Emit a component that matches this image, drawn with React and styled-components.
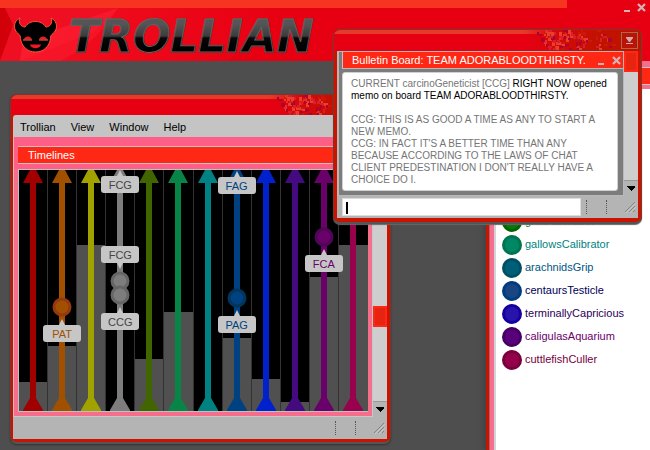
import React from 'react';
import styled, { createGlobalStyle } from 'styled-components';

const GlobalStyle = createGlobalStyle`
  *, *::before { box-sizing: border-box; }
  body {
    margin: 0;
    background: #4e4e4e;
    font-family: "Liberation Sans", Arial, sans-serif;
    font-size: 11px;
    color: #000;
    overflow: hidden;
  }
  button, input { font: inherit; }
  h1, h2, p, ul { margin: 0; padding: 0; }
`;

const Desktop = styled.div`
  position: relative;
  display: flex;
  flex-direction: column;
  height: 100vh;
  overflow: hidden;
`;

const Banner = styled.header`
  position: relative;
  flex: none;
  display: flex;
  justify-content: space-between;
  height: 61px;
  background: #e60012;
`;

const BannerArt = styled.svg`
  position: absolute;
  inset: 0;
  width: 100%;
  height: 100%;
`;

const Brand = styled.div`
  position: relative;
  display: flex;
  gap: 10px;
  padding: 16px 0 0 13px;
`;

const Wordmark = styled.h1`
  font: italic bold 44px/42px "DejaVu Sans", sans-serif;
  color: transparent;
  background: linear-gradient(#555 8px, #3c3c3c 20px, #080808 22px, #000 34px);
  background-clip: text;
  -webkit-background-clip: text;
  -webkit-text-stroke: 1px #66605f;
  padding-right: 8px;
`;

const Controls = styled.div`
  position: relative;
  display: flex;
  align-items: flex-start;
  gap: ${(p) => (p.$wide ? 5 : 6)}px;
  padding: ${(p) => (p.$wide ? '2px 4px 0 0' : '3px 2px 0 0')};
`;

const IconButton = styled.button`
  display: flex;
  padding: 0;
  border: 0;
  background: none;
  color: #d3b4b4;
`;

const Workspace = styled.main`
  flex: 1;
  display: flex;
  justify-content: flex-end;
  min-height: 0;
`;

const Roster = styled.aside`
  width: 165px;
  display: flex;
  flex-direction: column;
  border-left: 1px solid #444;
  box-shadow: inset 3px 0 #c81400, inset 4px 0 #b0606a, -2px 0 4px #444;
  background: #f56e8c;
  padding-left: 8px;
`;

const RosterHead = styled.div`
  height: 18px;
  margin: 6px 0 4px;
  border-top: 1px solid #c8c8c8;
  border-bottom: 1px solid #c8c8c8;
  background: #ff2814;
`;

const RosterList = styled.ul`
  flex: 1;
  padding: 121px 0 0 6px;
  background: #fff;
  border-left: 2px solid #d2d2d8;
  list-style: none;
`;

const Troll = styled.li`
  display: flex;
  align-items: center;
  gap: 3px;
  height: 23px;
  color: ${(p) => p.$color};
  white-space: nowrap;

  &::before {
    content: "";
    flex: none;
    width: 20px;
    height: 20px;
    border-radius: 50%;
    border: 3px solid ${(p) => p.$ring};
    background: ${(p) => p.$fill};
  }
  span { padding-bottom: 2px; }
`;

const WindowFrame = styled.section`
  position: absolute;
  display: flex;
  flex-direction: column;
  overflow: hidden;
  border: 1px solid #76382f;
  border-bottom: 2px solid #555;
  border-radius: 7px;
  background: #c81400;
`;

const TimelineWindow = styled(WindowFrame)`
  left: 10px;
  top: 94px;
  width: 381px;
  padding: 0 3px 3px 2px;
  box-shadow: 0 1px 2px #333;
`;

const BulletinWindow = styled(WindowFrame)`
  left: 333px;
  top: 29px;
  width: 309px;
  padding: 0 3px 4px;
  box-shadow: 0 1px 1px #666;
`;

const TitleStrip = styled.div`
  position: relative;
  flex: none;
  display: flex;
  justify-content: flex-end;
  align-items: flex-start;
  height: ${(p) => p.$height}px;
  margin: 0 -3px;
  padding: 2px 3px;
  background: linear-gradient(90deg, #e63a2a ${(p) => p.$fade}px, transparent ${(p) => p.$fade + 30}px) 0 0 / 100% 4px no-repeat,
    linear-gradient(90deg, #e60012 ${(p) => p.$fade}px, #c11200 ${(p) => p.$fade + 75}px);
`;

const Speckles = styled.svg`
  position: absolute;
  top: 0;
  left: ${(p) => p.$left}px;
`;

const CollapseButton = styled.button`
  position: relative;
  display: flex;
  width: 17px;
  height: 17px;
  padding: 0;
  border: 1px solid #a66c4c;
  background: #b81408;
`;

const MenuBar = styled.nav`
  display: flex;
  gap: 15px;
  height: 22px;
  padding: 2px 7px 0;
  border-top-left-radius: 3px;
  background: #c4c4c4;
`;

const MenuItem = styled.button`
  padding: 0;
  border: 0;
  background: none;
  font-size: 11px;
  color: #000;
`;

const Body = styled.div`
  display: flex;
  background: #b4b4b4;
`;

const PinkPane = styled.div`
  flex: 1;
  min-width: 0;
  padding: 9px 4px 4px 4px;
  border-left: 1px solid #c4c4c4;
  border-right: 1px solid #c8c8c8;
  border-bottom: 1px solid #c8c8c8;
  background: linear-gradient(#ff5f87 32px, #f56e8c 32px);
`;

const PaneTitle = styled.h2`
  height: 18px;
  padding: 0 10px;
  border: solid #c4c4c4;
  border-width: 1px 0;
  background: #ff2814;
  font: 11px/16px "Liberation Sans", Arial, sans-serif;
  color: #fff;
`;

const Chart = styled.div`
  display: grid;
  grid-template-columns: repeat(12, 1fr);
  height: 243px;
  margin-top: 5px;
  border: 1px solid #c0c0c0;
  border-width: 1px 0 1px 1px;
  background: #000;
`;

const Lane = styled.div`
  position: relative;
  border-right: 1px solid #333;

  &:last-child { border-right: 0; }
  svg { display: block; margin: 0 auto; }
`;

const LaneBar = styled.div`
  position: absolute;
  inset: auto 0 0 0;
  height: ${(p) => p.$height}px;
  background: #505050;
`;

const LaneDrawing = styled.svg`
  position: relative;
`;

const Tag = styled.span`
  position: absolute;
  z-index: 1;
  top: ${(p) => p.$top}px;
  left: 50%;
  width: 38px;
  height: 17px;
  margin-left: -19px;
  border-radius: 3px;
  background: #c6c6c6;
  color: ${(p) => p.$color};
  line-height: 18px;
  text-align: center;

  &::before {
    content: "";
    position: absolute;
    left: 16px;
    ${(p) => (p.$down ? 'top: 100%; border-top: 6px solid #c6c6c6;' : 'bottom: 100%; border-bottom: 6px solid #c6c6c6;')}
    border-left: 3px solid transparent;
    border-right: 3px solid transparent;
  }
`;

const ScrollTrack = styled.div`
  width: 14px;
  display: flex;
  flex-direction: column;
  align-items: center;
  background: #cecece;
`;

const ScrollThumb = styled.div`
  width: 100%;
  height: ${(p) => p.$height}px;
  margin: ${(p) => p.$offset}px 0 auto;
  border: 2px solid #ff2814;
  background: #e6240f;
`;

const ScrollArrow = styled.button`
  display: flex;
  justify-content: center;
  align-items: center;
  width: 100%;
  height: 16px;
  padding: 0;
  border: 0;
  border-top: 1px solid #999;
  background: #b4b4b4;
`;

const StatusBar = styled.footer`
  display: flex;
  justify-content: flex-end;
  align-items: center;
  height: 22px;
  gap: 15px;
  padding-right: 2px;
  background: #b4b4b4;
`;

const Divider = styled.div`
  width: 1px;
  height: 14px;
  margin: 0 2px;
  border-left: 1px dotted #555;
`;

const Board = styled.div`
  flex: 1;
  min-width: 0;
  padding: 0 0 4px 3px;
  border: solid #b8b8b8;
  border-width: 1px 1px 1px 2px;
  background: #7c7c7c;
`;

const BoardTitle = styled.div`
  display: flex;
  justify-content: space-between;
  height: 17px;
  border-left: 1px solid #c4c4c4;
  border-bottom: 1px solid #b8b8b8;
  background: #ff2814;
  color: #fff;

  h2 { padding-left: 9px; font: 11px/17px "Liberation Sans", Arial, sans-serif; white-space: nowrap; }
`;

const Memo = styled.article`
  height: 119px;
  margin: 3px 5px 0 0;
  padding: 5px 8px;
  border: 1px solid #d0d0d0;
  border-radius: 3px;
  background: #fff;
  font-size: 10px;
  line-height: 12px;
  color: #757575;
  white-space: nowrap;

  p + p { margin-top: 12px; }
  b { font-weight: normal; color: #000; }
`;

const Composer = styled.form`
  display: flex;
  align-items: center;
  gap: 15px;
  height: 22px;
  padding: 0 2px 0 5px;
  background: #b4b4b4;
`;

const MessageInput = styled.input`
  flex: 1;
  min-width: 0;
  height: 18px;
  margin-right: -12px;
  padding: 0 3px;
  border: 1px solid #ddd;
  border-radius: 0;
  outline: 0;
  background: linear-gradient(#000, #000) 3px 3px / 2px 12px no-repeat #fff;
`;

const MinusIcon = () => (
  <svg width="9" height="12" aria-hidden="true"><rect x="1" y="8" width="6" height="2" fill="currentColor" /></svg>
);
const CloseIcon = () => (
  <svg width="9" height="11" aria-hidden="true"><path d="M1 2l7 7M8 2l-7 7" stroke="currentColor" strokeWidth="2.2" /></svg>
);
const Arrow = () => (
  <svg width="10" height="6" aria-hidden="true" shapeRendering="crispEdges"><path d="M1 0h8v1l-4 4-4-4z" /></svg>
);
const Grip = () => (
  <svg width="12" height="12" aria-hidden="true" stroke="#858585">
    <path d="M1 11L11 1M5 11l6-6M9 11l2-2" /><path d="M2 12L12 2M6 12l6-6" stroke="#c8c8c8" />
  </svg>
);

const Devil = () => (
  <svg width="46" height="39" viewBox="0 0 46 39" aria-hidden="true">
    <path
      d="M7 2C0 5 0 14 5 17.5c2 1.500 2.500 3 2.500 5C8.500 30 14 36 22.500 36S36.500 30 37.500 22.500c0-2 .5-3.500 2.500-5C45 14 45 5 38 2c2 5-1 9-5 9-3-4-6-5.500-10.500-5.500S15 7 12 11C8 11 5 7 7 2z"
      fill="#000" stroke="#ff5533" strokeWidth="1"
    />
    <path d="M10.500 23.500c2-4 7-4 8.500 0zM26 23.500c1.500-4 6.500-4 8.500 0zM17 28.500h11c-1 5-10 5-11 0z" fill="#f01828" />
    <path d="M10 24h9M26 24h9" stroke="#ff6a4a" />
  </svg>
);

const speckleColors = ['#e8402c', '#b4002c', '#d8202c', '#e03424', '#a80632', '#cc1808'];
const specks = Array.from({ length: 150 }, (_, i) => {
  const h1 = (i * 7919 + 13 * i * i) % 997;
  const h2 = (i * 3571 + 29 * i * i) % 991;
  return { x: h1 % 82, y: (h2 % 10) * 2, w: 2 + (h2 % 3), h: 2 + (h1 % 3), fill: speckleColors[(h1 + h2) % 6] };
}).filter((s, i) => s.x > 3 + s.y / 2 && (s.x < 54 || i % 4 === 0));

const SpecklePattern = ({ left }) => (
  <Speckles $left={left} width="90" height="20" aria-hidden="true" shapeRendering="crispEdges">
    {specks.map((s, i) => <rect key={i} x={s.x} y={s.y} width={s.w} height={s.h} fill={s.fill} />)}
  </Speckles>
);

const lanes = [
  { color: '#a10000', bar: 29 },
  { color: '#a15000', bar: 65, dots: [137], ring: '#963814', tags: [{ text: 'PAT', top: 155 }] },
  { color: '#a1a100', bar: 166 },
  {
    color: '#7d7d7d', bar: 0, dots: [111, 125], ring: '#666', ink: '#444',
    tags: [{ text: 'FCG', top: 6 }, { text: 'FCG', top: 76, down: true }, { text: 'CCG', top: 143 }],
  },
  { color: '#416600', bar: 52 },
  { color: '#088446', bar: 99 },
  { color: '#008282', bar: 0 },
  { color: '#004182', bar: 73, dots: [128], ring: '#00365c', tags: [{ text: 'FAG', top: 7 }, { text: 'PAG', top: 146 }] },
  { color: '#0021cb', bar: 32 },
  { color: '#440a7f', bar: 9 },
  { color: '#6a006a', bar: 134, dots: [67], ring: '#4e0757', tags: [{ text: 'FCA', top: 85 }] },
  { color: '#99004d', bar: 166 },
];

const trolls = [
  { name: 'grimAuxiliatrix', color: '#008141', fill: '#087808', ring: '#006400' },
  { name: 'gallowsCalibrator', color: '#008282', fill: '#008764', ring: '#007350' },
  { name: 'arachnidsGrip', color: '#005682', fill: '#005f78', ring: '#005064' },
  { name: 'centaursTesticle', color: '#000056', fill: '#194682', ring: '#003c82' },
  { name: 'terminallyCapricious', color: '#2b0057', fill: '#2814aa', ring: '#1400a0' },
  { name: 'caligulasAquarium', color: '#6a006a', fill: '#5a007d', ring: '#460064' },
  { name: 'cuttlefishCuller', color: '#77003c', fill: '#96004b', ring: '#78003c' },
];

function TimelineLane({ lane }) {
  return (
    <Lane>
      <LaneBar $height={lane.bar} />
      <LaneDrawing width="28" height="241" aria-hidden="true">
        <path
          d="M11 0h6l7 13h-7v215l7 12v1H4v-1l7-12V13H4z"
          fill={lane.color}
        />
        {(lane.dots || []).map((y) => (
          <circle key={y} cx="14" cy={y} r="8" fill={lane.color} stroke={lane.ring} strokeWidth="3" />
        ))}
      </LaneDrawing>
      {(lane.tags || []).map((t) => (
        <Tag key={t.top} $top={t.top} $down={t.down} $color={lane.ink || lane.color}>{t.text}</Tag>
      ))}
    </Lane>
  );
}

export default function App() {
  return (
    <>
      <GlobalStyle />
      <Desktop>
        <Banner>
          <BannerArt viewBox="0 0 650 61" preserveAspectRatio="none" aria-hidden="true">
            <defs>
              <linearGradient id="shade"><stop stopColor="#ff1c2e" /><stop offset="1" stopColor="#e60012" /></linearGradient>
              <linearGradient id="dusk"><stop stopColor="#e00010" /><stop offset="1" stopColor="#c40008" /></linearGradient>
            </defs>
            <path d="M0 8h6l9 18L0 61z" fill="#d20008" />
            <path d="M5 8h113L96 31 20 61H0l13-36z" fill="#ee1022" />
            <path d="M20 61l3-20L118 8h170l-60 53z" fill="url(#shade)" opacity=".5" />
            <path d="M118 8Q95 45 60 61H20l3-20z" fill="#ff2436" opacity=".4" />
            <path d="M500 0h150v14L535 29l115 32V0z" fill="url(#dusk)" />
            <path d="M535 29L650 14v47h-60z" fill="#e60012" />
            <path d="M0 0h567v8H0z" fill="#f73420" />
          </BannerArt>
          <Brand><Devil /><Wordmark>TROLLIAN</Wordmark></Brand>
          <Controls $wide>
            <IconButton aria-label="Minimize"><MinusIcon /></IconButton>
            <IconButton aria-label="Close"><CloseIcon /></IconButton>
          </Controls>
        </Banner>

        <Workspace>
          <Roster>
            <RosterHead />
            <RosterList>
              {trolls.map((t) => (
                <Troll key={t.name} $color={t.color} $fill={t.fill} $ring={t.ring}><span>{t.name}</span></Troll>
              ))}
            </RosterList>
          </Roster>
        </Workspace>

        <TimelineWindow aria-label="Timelines">
          <TitleStrip $height={20} $fade={260}><SpecklePattern left={262} /></TitleStrip>
          <MenuBar>
            <MenuItem>Trollian</MenuItem>
            <MenuItem>View</MenuItem>
            <MenuItem>Window</MenuItem>
            <MenuItem>Help</MenuItem>
          </MenuBar>
          <Body>
            <PinkPane>
              <PaneTitle>Timelines</PaneTitle>
              <Chart>{lanes.map((lane) => <TimelineLane key={lane.color} lane={lane} />)}</Chart>
            </PinkPane>
            <ScrollTrack>
              <ScrollThumb $height={21} $offset={169} />
              <ScrollArrow aria-label="Scroll down"><Arrow /></ScrollArrow>
            </ScrollTrack>
          </Body>
          <StatusBar><Divider /><Divider /><Grip /></StatusBar>
        </TimelineWindow>

        <BulletinWindow aria-label="Bulletin Board">
          <TitleStrip $height={21} $fade={190}>
            <SpecklePattern left={198} />
            <CollapseButton aria-label="Collapse">
              <svg width="15" height="15" aria-hidden="true"><path d="M4 4h7v1l-3 4h-1l-3-4zM4 10h7v1H4z" fill="#d8a8a8" /></svg>
            </CollapseButton>
          </TitleStrip>
          <Body>
            <Board>
              <BoardTitle>
                <h2>Bulletin Board: TEAM ADORABLOODTHIRSTY.</h2>
                <Controls>
                  <IconButton aria-label="Minimize memo"><MinusIcon /></IconButton>
                  <IconButton aria-label="Close memo"><CloseIcon /></IconButton>
                </Controls>
              </BoardTitle>
              <Memo>
                <p>CURRENT carcinoGeneticist [CCG] <b>RIGHT NOW opened<br />memo on board TEAM ADORABLOODTHIRSTY.</b></p>
                <p>
                  CCG: THIS IS AS GOOD A TIME AS ANY TO START A<br />NEW MEMO.<br />
                  CCG: IN FACT IT'S A BETTER TIME THAN ANY<br />BECAUSE ACCORDING TO THE LAWS OF CHAT<br />
                  CLIENT PREDESTINATION I DON'T REALLY HAVE A<br />CHOICE DO I.
                </p>
              </Memo>
            </Board>
            <ScrollTrack>
              <ScrollThumb $height={21} $offset={0} />
              <ScrollArrow aria-label="Scroll memo down"><Arrow /></ScrollArrow>
            </ScrollTrack>
          </Body>
          <Composer>
            <MessageInput aria-label="Message" />
            <Divider /><Divider /><Grip />
          </Composer>
        </BulletinWindow>
      </Desktop>
    </>
  );
}
